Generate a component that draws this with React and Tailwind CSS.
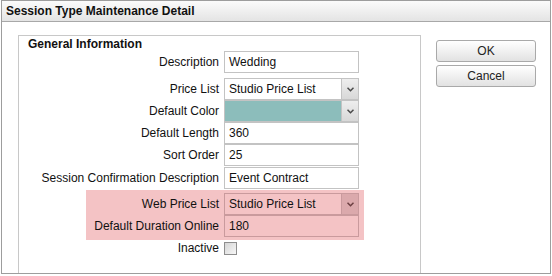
import React from 'react'

const font = { fontFamily: '"Liberation Sans", Arial, sans-serif' }

function Chevron({ color = '#4a4a4a' }) {
  return (
    <svg width="7" height="5" viewBox="0 0 7 5">
      <path d="M0.5 0.8 L3.5 3.8 L6.5 0.8" fill="none" stroke={color} strokeWidth="1.5" />
    </svg>
  )
}

function Field({ value, select, fill, pink }) {
  const border = pink ? 'border-[#c99a9d]' : 'border-[#c3c3c3]'
  return (
    <div
      className={`flex h-[22px] w-[135px] items-center border ${border}`}
      style={fill ? { background: fill } : undefined}
    >
      <span className="flex-1 truncate pl-[4px] text-[12px] text-[#111]">{value}</span>
      {select && (
        <div
          className={`flex h-full w-[17px] items-center justify-center border-l ${
            pink ? 'border-[#c99a9d] bg-[#dba9ac]' : 'border-[#c3c3c3] bg-gradient-to-b from-[#eeeeee] to-[#d8d8d8]'
          }`}
        >
          <Chevron color={pink ? '#6b3f42' : '#4a4a4a'} />
        </div>
      )}
    </div>
  )
}

function Row({ label, labelW = 'w-[200px]', className = '', ...field }) {
  return (
    <div className={`flex h-[22px] items-center ${className}`}>
      <div className={`${labelW} text-right text-[12px] text-[#111]`}>{label}</div>
      <div className="ml-[5px]">
        <Field {...field} />
      </div>
    </div>
  )
}

export default function App() {
  return (
    <div className="h-[276px] w-[552px] bg-white" style={font}>
      <div className="ml-[1px] flex h-[274px] w-[550px] flex-col overflow-hidden border border-[#9d9d9d]">
        <div className="h-[21px] shrink-0 border-b border-[#a8a8a8] bg-gradient-to-b from-[#fbfbfb] to-[#e4e4e4] pl-[4px] text-[12px] font-bold leading-[20px] text-[#111]">
          Session Type Maintenance Detail
        </div>
        <div className="flex flex-1 items-start">
          <div className="ml-[16px] mt-[13px] h-[300px] w-[403px] border border-[#c8c8c8] pt-[1px]">
            <div className="h-[14px] pl-[9px] text-[12px] font-bold leading-[14px] text-[#111]">General Information</div>
            <Row label="Description" value="Wedding" />
            <Row label="Price List" value="Studio Price List" select className="mt-[5px]" />
            <Row label="Default Color" select fill="#8cbdbb" />
            <Row label="Default Length" value="360" />
            <Row label="Sort Order" value="25" />
            <Row label="Session Confirmation Description" value="Event Contract" className="mt-[1px]" />
            <div className="ml-[67px] mt-[1px] w-[278px] bg-[#f4c3c5] py-[3px]">
              <Row label="Web Price List" labelW="w-[133px]" value="Studio Price List" select pink />
              <Row label="Default Duration Online" labelW="w-[133px]" value="180" pink />
            </div>
            <div className="flex h-[16px] items-center">
              <div className="w-[200px] text-right text-[12px] text-[#111]">Inactive</div>
              <div className="ml-[5px] h-[13px] w-[13px] border border-[#8e8e8e] bg-gradient-to-br from-[#d6d6d6] to-[#f7f7f7]" />
            </div>
          </div>
          <div className="ml-[15px] mt-[18px] flex w-[100px] flex-col gap-[3px]">
            <button className="h-[22px] rounded-[3px] border border-[#a9a9a9] bg-gradient-to-b from-white to-[#e2e2e2] text-[12px] text-[#222]">
              OK
            </button>
            <button className="h-[22px] rounded-[3px] border border-[#a9a9a9] bg-gradient-to-b from-white to-[#e2e2e2] text-[12px] text-[#222]">
              Cancel
            </button>
          </div>
        </div>
      </div>
    </div>
  )
}
